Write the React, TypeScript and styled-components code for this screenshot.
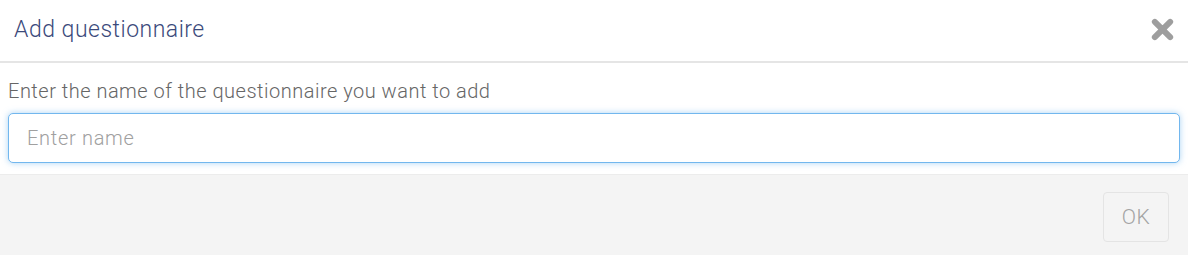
import React from 'react';
import styled, { createGlobalStyle } from 'styled-components';

const GlobalStyle = createGlobalStyle`
  html, body {
    margin: 0;
    padding: 0;
    background: #ffffff;
  }
  body {
    font-family: Roboto, "Liberation Sans", Arial, sans-serif;
    font-weight: 300;
  }
  * {
    box-sizing: border-box;
  }
`;

const Modal = styled.div`
  width: 1188px;
  display: flex;
  flex-direction: column;
`;

const Header = styled.div`
  height: 63px;
  display: flex;
  align-items: center;
  justify-content: space-between;
  padding: 0 14px 2px 14px;
  border-bottom: 2px solid #e5e5e5;
`;

const Title = styled.h4`
  margin: 0;
  font-size: 23px;
  font-weight: 300;
  color: #3b4a7b;
  letter-spacing: 0.5px;
`;

const CloseButton = styled.button`
  border: none;
  background: none;
  padding: 0;
  width: 24px;
  height: 24px;
  display: flex;
  align-items: center;
  justify-content: center;
  cursor: pointer;
  color: #9e9e9e;
`;

const Body = styled.div`
  padding: 16px 8px 11px 8px;
  display: flex;
  flex-direction: column;
  gap: 10px;
`;

const Label = styled.label`
  font-size: 20px;
  line-height: 24px;
  letter-spacing: 0.5px;
  color: #666666;
`;

const NameInput = styled.input`
  height: 50px;
  width: 100%;
  padding: 0 18px;
  font-family: inherit;
  font-weight: 300;
  font-size: 20px;
  letter-spacing: 0.7px;
  color: #555;
  border: 1px solid #72b7ee;
  border-radius: 5px;
  outline: none;
  box-shadow: 0 0 6px rgba(102, 175, 233, 0.55);

  &::placeholder {
    color: #a0a0a0;
  }
`;

const Footer = styled.div`
  height: 81px;
  background: #f4f4f4;
  border-top: 1px solid #ececec;
  display: flex;
  justify-content: flex-end;
  align-items: flex-start;
  padding: 17px 19px 0 0;
`;

const OkButton = styled.button<{ $disabled?: boolean }>`
  width: 66px;
  height: 50px;
  border: 1px solid #e4e4e4;
  border-radius: 4px;
  background: #f4f4f4;
  font-family: inherit;
  font-weight: 300;
  font-size: 21px;
  letter-spacing: 0.5px;
  color: ${p => (p.$disabled ? '#a3a3a3' : '#333')};
  cursor: ${p => (p.$disabled ? 'not-allowed' : 'pointer')};
`;

const TimesIcon = () => (
  <svg width="23" height="23" viewBox="0 0 24 24">
    <path
      d="M4 4 L20 20 M20 4 L4 20"
      stroke="currentColor"
      strokeWidth="6.2"
      strokeLinecap="round"
      fill="none"
    />
  </svg>
);

const App: React.FC = () => {
  return (
    <>
      <GlobalStyle />
      <Modal>
        <Header>
          <Title>Add questionnaire</Title>
          <CloseButton aria-label="Close">
            <TimesIcon />
          </CloseButton>
        </Header>
        <Body>
          <Label htmlFor="qname">Enter the name of the questionnaire you want to add</Label>
          <NameInput id="qname" placeholder="Enter name" />
        </Body>
        <Footer>
          <OkButton $disabled>OK</OkButton>
        </Footer>
      </Modal>
    </>
  );
};

export default App;
